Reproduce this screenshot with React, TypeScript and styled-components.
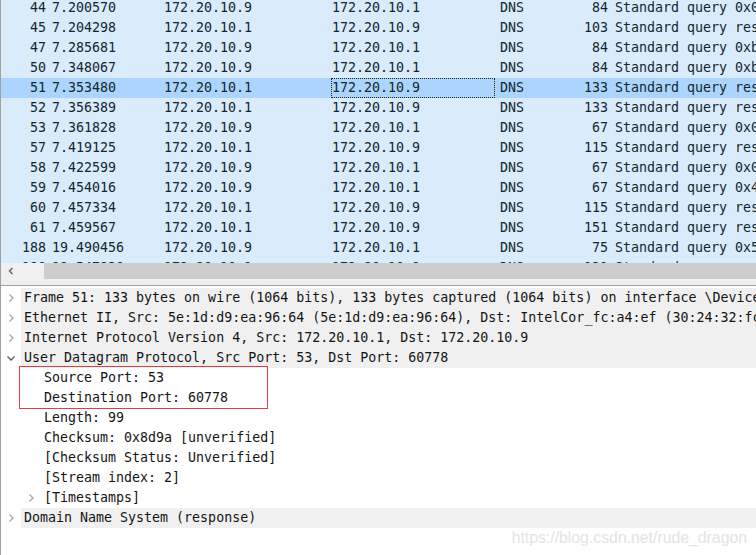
import styled, { createGlobalStyle } from 'styled-components';

type Packet = {
  no: number;
  time: string;
  src: string;
  dst: string;
  proto: string;
  len: number;
  info: string;
};

const packets: Packet[] = [
  { no: 44, time: '7.200570', src: '172.20.10.9', dst: '172.20.10.1', proto: 'DNS', len: 84, info: 'Standard query 0x0' },
  { no: 45, time: '7.204298', src: '172.20.10.1', dst: '172.20.10.9', proto: 'DNS', len: 103, info: 'Standard query res' },
  { no: 47, time: '7.285681', src: '172.20.10.9', dst: '172.20.10.1', proto: 'DNS', len: 84, info: 'Standard query 0xb' },
  { no: 50, time: '7.348067', src: '172.20.10.9', dst: '172.20.10.1', proto: 'DNS', len: 84, info: 'Standard query 0xb' },
  { no: 51, time: '7.353480', src: '172.20.10.1', dst: '172.20.10.9', proto: 'DNS', len: 133, info: 'Standard query res' },
  { no: 52, time: '7.356389', src: '172.20.10.1', dst: '172.20.10.9', proto: 'DNS', len: 133, info: 'Standard query res' },
  { no: 53, time: '7.361828', src: '172.20.10.9', dst: '172.20.10.1', proto: 'DNS', len: 67, info: 'Standard query 0x0' },
  { no: 57, time: '7.419125', src: '172.20.10.1', dst: '172.20.10.9', proto: 'DNS', len: 115, info: 'Standard query res' },
  { no: 58, time: '7.422599', src: '172.20.10.9', dst: '172.20.10.1', proto: 'DNS', len: 67, info: 'Standard query 0x0' },
  { no: 59, time: '7.454016', src: '172.20.10.9', dst: '172.20.10.1', proto: 'DNS', len: 67, info: 'Standard query 0x4' },
  { no: 60, time: '7.457334', src: '172.20.10.1', dst: '172.20.10.9', proto: 'DNS', len: 115, info: 'Standard query res' },
  { no: 61, time: '7.459567', src: '172.20.10.1', dst: '172.20.10.9', proto: 'DNS', len: 151, info: 'Standard query res' },
  { no: 188, time: '19.490456', src: '172.20.10.9', dst: '172.20.10.1', proto: 'DNS', len: 75, info: 'Standard query 0x5' },
  { no: 190, time: '19.547930', src: '172.20.10.1', dst: '172.20.10.9', proto: 'DNS', len: 131, info: 'Standard query res' },
];

type TreeItem = { text: string; depth: number; expander?: 'open' | 'closed' };

const tree: TreeItem[] = [
  { text: 'Frame 51: 133 bytes on wire (1064 bits), 133 bytes captured (1064 bits) on interface \\Device\\NPF_{', depth: 0, expander: 'closed' },
  { text: 'Ethernet II, Src: 5e:1d:d9:ea:96:64 (5e:1d:d9:ea:96:64), Dst: IntelCor_fc:a4:ef (30:24:32:fc:a4:ef)', depth: 0, expander: 'closed' },
  { text: 'Internet Protocol Version 4, Src: 172.20.10.1, Dst: 172.20.10.9', depth: 0, expander: 'closed' },
  { text: 'User Datagram Protocol, Src Port: 53, Dst Port: 60778', depth: 0, expander: 'open' },
  { text: 'Source Port: 53', depth: 1 },
  { text: 'Destination Port: 60778', depth: 1 },
  { text: 'Length: 99', depth: 1 },
  { text: 'Checksum: 0x8d9a [unverified]', depth: 1 },
  { text: '[Checksum Status: Unverified]', depth: 1 },
  { text: '[Stream index: 2]', depth: 1 },
  { text: '[Timestamps]', depth: 1, expander: 'closed' },
  { text: 'Domain Name System (response)', depth: 0, expander: 'closed' },
];

const SELECTED = 51;

const GlobalStyle = createGlobalStyle`
  html, body {
    margin: 0;
    padding: 0;
    background: #ffffff;
    overflow: hidden;
  }
`;

const Chevron = ({ open }: { open: boolean }) =>
  open ? (
    <svg width="10" height="10" viewBox="0 0 10 10">
      <path d="M1.5 3.5 L5 7 L8.5 3.5" fill="none" stroke="#5a5a5a" strokeWidth="1.3" />
    </svg>
  ) : (
    <svg width="10" height="10" viewBox="0 0 10 10">
      <path d="M3.5 1.5 L7 5 L3.5 8.5" fill="none" stroke="#a6a6a6" strokeWidth="1.3" />
    </svg>
  );

const App = () => (
  <>
    <GlobalStyle />
    <Window>
      <PacketList>
        <Rows>
          {packets.map((p) => (
            <PacketRow key={p.no} $selected={p.no === SELECTED}>
              <NumCell>{p.no}</NumCell>
              <Cell>{p.time}</Cell>
              <Cell>{p.src}</Cell>
              <Cell $focused={p.no === SELECTED}>{p.dst}</Cell>
              <Cell>{p.proto}</Cell>
              <LenCell>{p.len}</LenCell>
              <InfoCell>{p.info}</InfoCell>
            </PacketRow>
          ))}
        </Rows>
      </PacketList>
      <HScrollbar>
        <ArrowButton>
          <svg width="8" height="8" viewBox="0 0 8 8">
            <path d="M5.5 1 L2.5 4 L5.5 7" fill="none" stroke="#606060" strokeWidth="1.4" />
          </svg>
        </ArrowButton>
        <Thumb />
      </HScrollbar>
      <Splitter />
      <DetailPane>
        {tree.map((item, i) => (
          <TreeRow key={i} $depth={item.depth}>
            <Expander>{item.expander && <Chevron open={item.expander === 'open'} />}</Expander>
            <TreeLabel $top={item.depth === 0}>{item.text}</TreeLabel>
          </TreeRow>
        ))}
        <Annotation />
      </DetailPane>
      <Watermark>https://blog.csdn.net/rude_dragon</Watermark>
    </Window>
  </>
);

const Window = styled.div`
  position: relative;
  display: flex;
  flex-direction: column;
  width: 756px;
  height: 555px;
  box-sizing: border-box;
  border-left: 1px solid #a0a0a0;
  font-family: 'DejaVu Sans Mono', 'Liberation Mono', monospace;
  font-size: 13.3px;
  color: #12272e;
  overflow: hidden;
`;

const PacketList = styled.div`
  height: 263px;
  flex: none;
  overflow: hidden;
  background: #daebfc;
`;

const Rows = styled.div`
  margin-top: -2px;
`;

const PacketRow = styled.div<{ $selected?: boolean }>`
  display: grid;
  grid-template-columns: 51px 112px 168px 168px 60px 48px 1fr;
  height: 20px;
  line-height: 20px;
  white-space: nowrap;
  background: ${(p) => (p.$selected ? '#abd5fc' : 'transparent')};
`;

const Cell = styled.div<{ $focused?: boolean }>`
  overflow: hidden;
  box-sizing: border-box;
  ${(p) =>
    p.$focused &&
    `
    outline: 1px dotted #202020;
    outline-offset: -1px;
    margin-right: 5px;
    margin-left: -1px;
    padding-left: 1px;
  `}
`;

const NumCell = styled(Cell)`
  text-align: right;
  padding-right: 6px;
`;

const LenCell = styled(Cell)`
  text-align: right;
`;

const InfoCell = styled(Cell)`
  padding-left: 7px;
`;

const HScrollbar = styled.div`
  display: flex;
  height: 16px;
  flex: none;
  background: #f0f0f0;
`;

const ArrowButton = styled.div`
  width: 43px;
  display: flex;
  align-items: center;
  padding-left: 6px;
  box-sizing: border-box;
`;

const Thumb = styled.div`
  flex: 1;
  background: #cdcdcd;
`;

const Splitter = styled.div`
  height: 6px;
  flex: none;
  background: #f0f0f0;
`;

const DetailPane = styled.div`
  position: relative;
  flex: 1;
  border-top: 1px solid #a0a0a0;
  padding-top: 2px;
  background: #ffffff;
  color: #141414;
`;

const TreeRow = styled.div<{ $depth: number }>`
  display: flex;
  height: 20px;
  line-height: 20px;
  padding-left: ${(p) => p.$depth * 20}px;
  white-space: nowrap;
`;

const Expander = styled.div`
  width: 20px;
  flex: none;
  display: flex;
  align-items: center;
  justify-content: center;
`;

const TreeLabel = styled.div<{ $top?: boolean }>`
  flex: 1;
  padding-left: 3px;
  overflow: hidden;
  background: ${(p) => (p.$top ? '#f0f0f0' : 'transparent')};
`;

const Annotation = styled.div`
  position: absolute;
  left: 18px;
  top: 80px;
  width: 249px;
  height: 43px;
  box-sizing: border-box;
  border: 1px solid #e43d3d;
  pointer-events: none;
`;

const Watermark = styled.div`
  position: absolute;
  right: 9px;
  bottom: 8px;
  font-family: 'Liberation Sans', Arial, sans-serif;
  font-size: 15.8px;
  color: #e4e4e4;
  pointer-events: none;
`;

export default App;
